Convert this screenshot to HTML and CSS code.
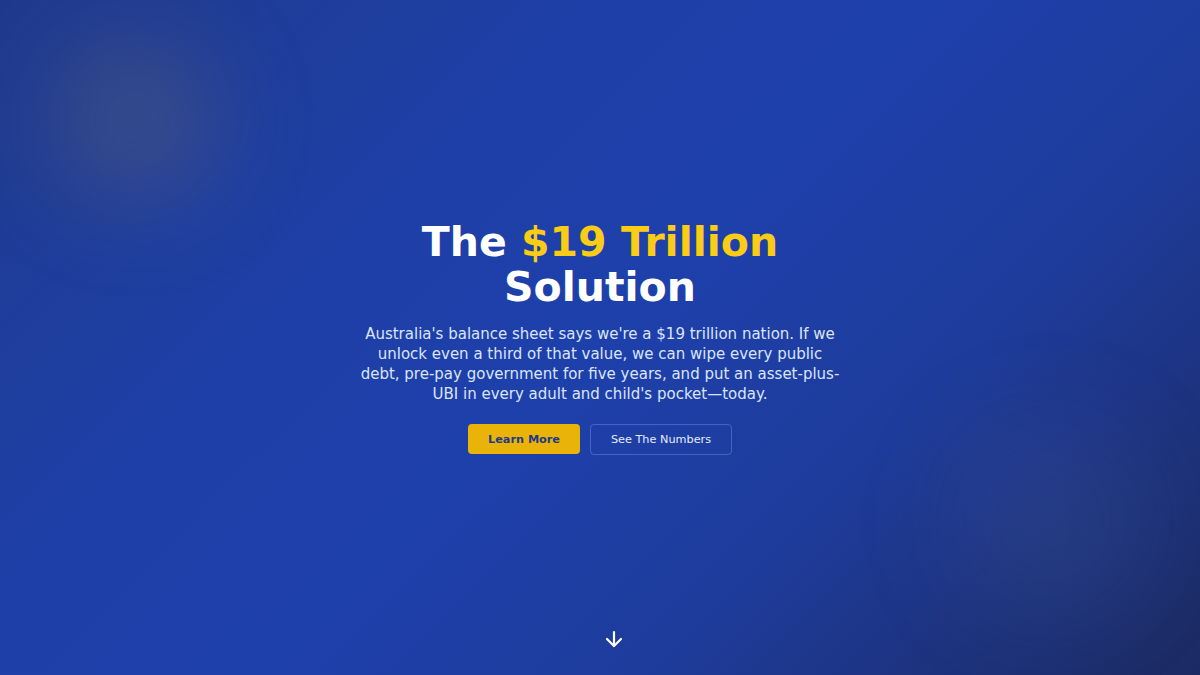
FILE: index.html
```html
<!DOCTYPE html>
<html lang="en">
<head>
<meta charset="utf-8">
<title>The $19 Trillion Solution</title>
<link rel="stylesheet" href="styles.css">
</head>
<body>
<section class="hero">
  <div class="blob blob-a"></div>
  <div class="blob blob-b"></div>
  <div class="content">
    <h1 class="title">The <span class="accent">$19 Trillion</span> Solution</h1>
    <p class="lead">Australia's balance sheet says we're a $19 trillion nation. If we unlock even a third of that value, we can wipe every public debt, pre-pay government for five years, and put an asset-plus-UBI in every adult and child's pocket—today.</p>
    <div class="actions">
      <a class="btn btn-primary" href="#">Learn More</a>
      <a class="btn btn-outline" href="#">See The Numbers</a>
    </div>
  </div>
  <div class="scroll-cue">
    <svg viewBox="0 0 24 24" width="24" height="24" fill="none" stroke="currentColor" stroke-width="2.2" stroke-linecap="round" stroke-linejoin="round"><path d="M12 5v14"/><path d="m19 12-7 7-7-7"/></svg>
  </div>
</section>
</body>
</html>
```

FILE: styles.css
```css
* { box-sizing: border-box; }
html, body { margin: 0; padding: 0; }
body {
  font-family: "DejaVu Sans", "Noto Sans", sans-serif;
  color: #fff;
  background: #1e3a8a;
}
.hero {
  position: relative;
  height: 675px;
  overflow: hidden;
  display: flex;
  align-items: center;
  justify-content: center;
  background:
    linear-gradient(135deg, #1f3a8c 0%, #1e3fa6 30%, #1e40ab 50%, #1e3c9c 70%, #1c2a62 100%);
}
.blob {
  position: absolute;
  border-radius: 50%;
  filter: blur(45px);
}
.blob-a {
  left: 50px; top: 35px;
  width: 170px; height: 170px;
  background: rgba(110, 110, 110, 0.3);
}
.blob-b {
  left: 950px; top: 420px;
  width: 200px; height: 200px;
  background: rgba(70, 95, 150, 0.18);
}
.content {
  position: relative;
  width: 480px;
  text-align: center;
  display: flex;
  flex-direction: column;
  align-items: center;
}
.title {
  margin: 0 0 14px;
  font-size: 41px;
  line-height: 45px;
  font-weight: 700;
  color: #ffffff;
}
.accent { color: #facc15; }
.lead {
  margin: 0 0 20px;
  font-size: 15px;
  line-height: 20px;
  color: #dbe4fb;
}
.actions {
  display: flex;
  gap: 10px;
  justify-content: center;
}
.btn {
  display: inline-flex;
  align-items: center;
  justify-content: center;
  height: 30px;
  border-radius: 4px;
  font-size: 11.25px;
  text-decoration: none;
}
.btn-primary {
  width: 112px;
  background: #eab308;
  color: #1e3a8a;
  font-weight: 700;
}
.btn-outline {
  width: 142px;
  height: 31px;
  border: 1px solid rgba(147, 171, 255, 0.35);
  color: #e6ecfb;
}
.scroll-cue {
  position: absolute;
  left: 602px;
  bottom: 24px;
  width: 24px;
  height: 24px;
  color: #fff;
}
.scroll-cue svg { display: block; }
```
